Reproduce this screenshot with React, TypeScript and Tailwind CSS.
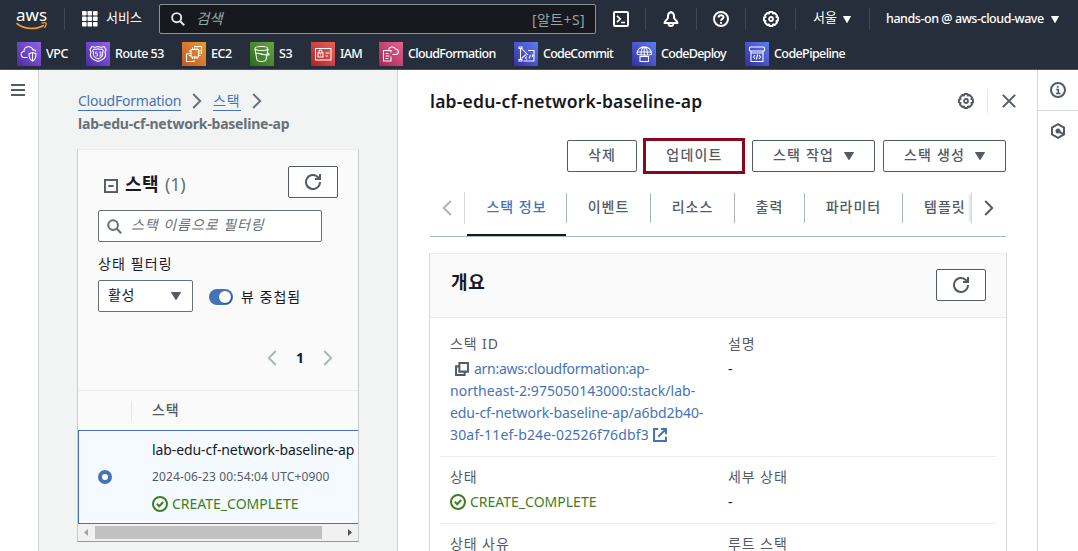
import React from "react";

type IconProps = { className?: string };

const Svg = ({ children, className = "" }: { children: React.ReactNode; className?: string }) => (
  <svg viewBox="0 0 16 16" fill="none" stroke="currentColor" strokeWidth="2" className={`shrink-0 ${className}`}>
    {children}
  </svg>
);

const Gear = ({ className = "size-4" }: IconProps) => (
  <Svg className={className}>
    <path
      strokeWidth="1.9"
      strokeLinejoin="round"
      d="M6.5 1h3l.5 1.600L11.600 2 14 4.400 13.400 6 15 6.500v3l-1.600.5.6 1.600-2.400 2.400-1.600-.6-.5 1.600h-3L6 13.400l-1.600.6L2 11.600l.6-1.600L1 9.500v-3L2.600 6 2 4.400 4.400 2 6 2.600z"
    />
    <circle cx="8" cy="8" r="2" strokeWidth="1.8" />
  </Svg>
);
const Search = ({ className = "size-4" }: IconProps) => (
  <Svg className={className}>
    <circle cx="6.500" cy="6.500" r="5.200" strokeWidth="2.200" />
    <path d="M10.200 10.200l4.900 4.900" strokeWidth="2.300" />
  </Svg>
);
const Refresh = () => (
  <Svg className="size-4 text-[#545b64]">
    <path d="M15 8a7 7 0 1 1-2.200-5.100L14.500 5" />
    <path d="M15 0v5h-5" />
  </Svg>
);
const Chevron = ({ className = "", left = false }: IconProps & { left?: boolean }) => (
  <svg viewBox="0 0 10 16" fill="none" stroke="currentColor" strokeWidth="2" className={`h-4 w-[10px] shrink-0 ${className}`}>
    <path d={left ? "M8.800 1L1.800 8l7 7" : "M1.200 1l7 7-7 7"} />
  </svg>
);
const Caret = ({ className = "" }: IconProps) => (
  <svg viewBox="0 0 10 8" fill="currentColor" preserveAspectRatio="none" className={`shrink-0 ${className}`}>
    <path d="M.5 0h9a.4.4 0 0 1 .3.700L5.500 7.700a.6.6 0 0 1-1 0L.2.700A.4.4 0 0 1 .5 0z" />
  </svg>
);
const Check = () => (
  <Svg className="size-4">
    <circle cx="8" cy="8" r="7" />
    <path d="M4.800 7.800l2.400 2.400 4-4.200" />
  </Svg>
);

const GLYPHS: Record<string, React.ReactNode> = {
  VPC: (
    <>
      <path d="M10.500 15.500H7.500a3 3 0 0 1-.5-6 4.600 4.600 0 0 1 9-1.500 2.500 2.500 0 0 1 3 1.500" />
      <path d="M15.500 10.500l3.500 1.200c0 3.500-.5 6-3.500 7.300-3-1.300-3.500-3.800-3.500-7.300zM15.500 10.500v8.500" />
    </>
  ),
  "Route 53": (
    <>
      <path d="M6 4.500c2 1 4 1 6 0 2 1 4 1 6 0l2 3-1 2.500c2 5-1 7.500-7 9.500-6-2-9-4.500-7-9.500L4 7.500z" />
      <path d="M8 7c1.500.5 2.500.5 4-.3 1.500.8 2.500.8 4 .3l1.300 1.500-.7 2c1.200 3.500-.8 5-4.600 6.500-3.800-1.500-5.800-3-4.600-6.500l-.7-2z" />
      <path d="M11.500 10H9.500v1.700h2V14h-2M13 10h2v4h-2M13.500 12H15" strokeWidth=".8" />
    </>
  ),
  EC2: (
    <>
      <rect x="9" y="7.500" width="7.500" height="7.500" rx=".5" />
      <path d="M10.500 7.500V5.500M12.700 7.500V5.500M15 7.500V5.500M10.500 17v-2M12.700 17v-2M15 17v-2M9 9H7M9 11.200H7M9 13.500H7M18.500 9h-2M18.500 11.200h-2M18.500 13.500h-2M12 4.500h7.500V12M7 12H4.500v7.500H12V18" />
    </>
  ),
  S3: (
    <>
      <ellipse cx="11.500" cy="6.500" rx="6.500" ry="2" />
      <path d="M5 7l2 11c1.200 2 7.800 2 9 0l2-11M6 11c4 .2 8 2.700 13 2 .8-.8-1-1.800-2-2.200" />
      <circle cx="11.500" cy="12" r=".8" fill="white" stroke="none" />
    </>
  ),
  IAM: (
    <>
      <rect x="4.500" y="6.500" width="15.500" height="11.500" />
      <rect x="7" y="11" width="5" height="4" />
      <path d="M8 11V9.500a1.500 1.500 0 0 1 3 0V11M9.500 12.500v1M14.500 11h4M14.500 14h2.500" />
    </>
  ),
  CloudFormation: (
    <>
      <path d="M12 10.500V8.500H4.500v10.500H12V14.500M6.500 11.500h3M6.500 14h4M6.500 16.500h3" />
      <path d="M9.500 7.500A3.800 3.800 0 0 1 16.500 7c3.500.2 4 4.800.5 5.500H13.500" />
    </>
  ),
  CodeCommit: (
    <>
      <path d="M6.500 6.500v11M7.500 6.500l6.500 6.500M7.500 16.500l4.500-4M14 8.500h6v10.500H9.500M5 19h3v-1.500H5zM5 5h3v1.500H5zM13 14.500l-1.500 1.500 1.500 1.500M16.500 13l-1.500 3.500M18 12.500l1 1.200-1 1.300" />
    </>
  ),
  CodeDeploy: (
    <>
      <path d="M5 12c0-9.500 14.500-9.500 14.500 0 0 1.500-14.500 1.500-14.500 0zM9 12.500c0-5 1.200-7 3.200-7.500 2 .5 3.300 2.500 3.300 7.500M12.200 5v8M5.500 10h13.500M8 14.500h8.500v5H8z" />
    </>
  ),
  CodePipeline: (
    <>
      <rect x="4.500" y="5" width="15" height="4" rx="1" />
      <path d="M6 9v10.500h12V9M6 11h12M10 13l-1.500 2 1.500 2M14 13l1.500 2-1.500 2M12.700 12.500l-1.400 5" />
    </>
  ),
};

const SERVICES: { name: string; cell: string; tile: string; text: string }[] = [
  { name: "VPC", cell: "w-[69px]", tile: "from-[#4d2ba3] to-[#9362ec]", text: "tracking-[-0.4px]" },
  { name: "Route 53", cell: "w-[96px]", tile: "from-[#4d2ba3] to-[#9362ec]", text: "tracking-[-0.5px]" },
  { name: "EC2", cell: "w-[68px]", tile: "from-[#c25a28] to-[#e99a35]", text: "tracking-[-0.5px]" },
  { name: "S3", cell: "w-[61px]", tile: "from-[#2c6b22] to-[#69a343]", text: "tracking-[-0.5px]" },
  { name: "IAM", cell: "w-[68px]", tile: "from-[#b11f26] to-[#e9605b]", text: "tracking-[-0.7px]" },
  { name: "CloudFormation", cell: "w-[135px]", tile: "from-[#a52456] to-[#e56290]", text: "tracking-[-0.65px]" },
  { name: "CodeCommit", cell: "w-[118px]", tile: "from-[#352da4] to-[#5f7cf0]", text: "tracking-[-0.8px]" },
  { name: "CodeDeploy", cell: "w-[113px]", tile: "from-[#352da4] to-[#5f7cf0]", text: "tracking-[-0.7px]" },
  { name: "CodePipeline", cell: "w-[110px]", tile: "from-[#352da4] to-[#5f7cf0]", text: "tracking-[-0.6px]" },
];

const Divider = () => <span className="h-[22px] w-px shrink-0 bg-[#414750]" />;

function Header() {
  return (
    <header className="flex h-[70px] shrink-0 flex-col border-b border-[#4b525d] bg-[#272e3b] text-white">
      <div className="flex h-[38px] items-center">
        <div className="ml-4 flex w-[31px] shrink-0 flex-col items-center pt-px">
          <span className="h-[14px] text-[17px] leading-[11px] tracking-[0px]">aws</span>
          <svg viewBox="0 0 31 8" className="-mt-px h-2 w-[31px]" fill="none" stroke="#f29a2e" strokeWidth="1.7">
            <path d="M.5 1.200C8 7.600 20 8 28 3.200" />
            <path d="M25.500 1.200c2-.6 4-.6 4.500-.2.400.8-.3 3.200-1.600 4.800" strokeWidth="1.3" />
          </svg>
        </div>
        <div className="ml-[17px] flex"><Divider /></div>
        <svg viewBox="0 0 16 16" fill="white" className="ml-[17px] size-4 shrink-0">
          {[0, 5.5, 11].map((y) => [0, 5.5, 11].map((x) => <rect key={`${x}-${y}`} x={x} y={y} width="4.6" height="4.6" rx=".8" />))}
        </svg>
        <span className="ml-2 w-[53px] shrink-0 pb-[2px] text-[13px] tracking-[0.1px] whitespace-nowrap">서비스</span>
        <div className="flex h-[30px] w-[437px] shrink-0 items-center rounded-[2px] border border-[#8a9496] bg-[#17191f] pr-[10px] pl-[11px]">
          <Search className="size-[14px] text-[#e4e7e8]" />
          <span className="ml-[11px] flex-1 text-[14.5px] text-[#95a5a6] italic">검색</span>
          <span className="text-[14px] tracking-[0.4px] text-[#95a5a6]">[알트+S]</span>
        </div>
        <Svg className="ml-[17px] size-4">
          <rect x="1" y="1" width="14" height="14" rx="1" />
          <path d="M4 4.800L7.200 8 4 11.200M8 11.500h4" strokeWidth="1.7" />
        </Svg>
        <div className="ml-4 flex"><Divider /></div>
        <Svg className="ml-[17px] size-4">
          <path d="M8 1.200C6 1.500 5 3 5 5v1.500C5 8.500 1.500 9.500 1.500 12h13c0-2.500-3.500-3.500-3.500-5.500V5c0-2-1-3.500-3-3.800z" strokeLinejoin="round" />
          <path d="M8 0v2M5.500 12.500a2.500 2.500 0 0 0 5 0" />
        </Svg>
        <div className="ml-[17px] flex"><Divider /></div>
        <Svg className="ml-4 size-4">
          <circle cx="8" cy="8" r="7" />
          <path d="M5.500 6.600c0-3.200 5-3.200 5-.3C10.500 7.900 8 7.900 8 9.800M8 10.900v1.900" />
        </Svg>
        <div className="ml-4 flex"><Divider /></div>
        <Gear className="ml-[17px] size-4" />
        <div className="ml-4 flex"><Divider /></div>
        <span className="ml-[17px] w-[30px] shrink-0 pb-[2px] text-[13px] whitespace-nowrap">서울</span>
        <Caret className="h-[7px] w-2" />
        <div className="ml-[18px] flex"><Divider /></div>
        <span className="ml-4 w-[165px] shrink-0 text-[12.5px] font-medium tracking-[-0.45px] whitespace-nowrap">hands-on @ aws-cloud-wave</span>
        <Caret className="h-[7px] w-2" />
      </div>
      <nav className="flex h-[31px] items-center pl-[17px]">
        {SERVICES.map((s) => (
          <a key={s.name} className={`flex shrink-0 items-center gap-[5px] ${s.cell}`}>
            <span className={`size-6 shrink-0 bg-linear-to-tr ${s.tile}`}>
              <svg viewBox="0 0 24 24" className="size-6" fill="none" stroke="white" strokeWidth="1.05">{GLYPHS[s.name]}</svg>
            </span>
            <span className={`pt-[2px] text-[12.5px] font-medium whitespace-nowrap ${s.text}`}>{s.name}</span>
          </a>
        ))}
      </nav>
    </header>
  );
}

const RefreshButton = () => (
  <button className="flex h-8 w-[50px] shrink-0 items-center justify-center rounded-[2px] border border-[#545b64] bg-white">
    <Refresh />
  </button>
);

function StackList() {
  return (
    <aside className="flex w-[359px] shrink-0 flex-col border-r border-[#cfd2d2] bg-[#f2f3f3] pt-5 pl-[38px]">
      <div className="ml-px flex h-[22px] items-center text-[14px] text-[#4573b8]">
        <a className="h-[20px] w-[103px] border-b border-[#4573b8] leading-[20px] tracking-[-0.24px] whitespace-nowrap">CloudFormation</a>
        <Chevron className="ml-[11px] text-[#687078]" />
        <a className="ml-[11px] h-[20px] w-7 border-b border-[#4573b8] leading-[20px] tracking-[0.8px]">스택</a>
        <Chevron className="ml-[11px] text-[#687078]" />
      </div>
      <div className="ml-px h-[22px] text-[14px] leading-[23px] font-bold tracking-[-0.21px] whitespace-nowrap text-[#687078]">lab-edu-cf-network-baseline-ap</div>
      <div className="mt-[15px] flex h-[393px] w-[282px] flex-col overflow-hidden border border-t-[#eaeded] border-r-[#c9cccc] border-b-[#959a9b] border-l-[#c9cccc] bg-[#fafafa]">
        <div className="flex h-[60px] items-center pr-5 pl-[26px]">
          <Svg className="mt-[11px] size-[14px] text-[#545b64]">
            <rect x="1.100" y="1.100" width="13.800" height="13.800" strokeWidth="2.200" />
            <path d="M5 8h6" strokeWidth="2.200" />
          </Svg>
          <span className="ml-[7px] w-10 pt-[8px] text-[18px] font-bold tracking-[0.5px] text-[#16191f]">스택</span>
          <span className="flex-1 pt-[9px] text-[18px] tracking-[-0.2px] text-[#687078]">(1)</span>
          <span className="mt-1 flex"><RefreshButton /></span>
        </div>
        <div className="ml-[20px] flex h-8 w-[224px] shrink-0 items-center rounded-[2px] border border-[#687078] bg-white pl-2">
          <Search className="size-[15px] text-[#687078]" />
          <span className="ml-[9px] pb-[3px] text-[14px] tracking-[0.95px] whitespace-nowrap text-[#687078] italic">스택 이름으로 필터링</span>
        </div>
        <div className="mt-[11px] ml-[20px] h-[22px] text-[14px] leading-[22px] tracking-[1.1px] text-[#16191f]">상태 필터링</div>
        <div className="mt-[5px] ml-[20px] flex h-8 items-center text-[14px] text-[#16191f]">
          <div className="flex h-8 w-[95px] items-center justify-between rounded-[2px] border border-[#687078] bg-white pr-[11px] pl-[9px]">
            <span className="pb-[3px] tracking-[0.5px]">활성</span>
            <Caret className="h-[8px] w-[10px] text-[#545b64]" />
          </div>
          <span className="mt-[2px] ml-4 flex h-4 w-6 items-center justify-end rounded-full bg-[#4573b8] pr-[2px]">
            <span className="size-3 rounded-full bg-white shadow-[1px_1px_1px_#2d4f84]" />
          </span>
          <span className="ml-2 tracking-[1px]">뷰 중첩됨</span>
        </div>
        <div className="mt-[35px] flex h-[22px] items-center justify-end pr-[25px] text-[#aab7b8]">
          <Chevron left />
          <span className="w-[46px] pb-[2px] text-center text-[14px] font-bold text-[#16191f]">1</span>
          <Chevron />
        </div>
        <div className="mt-[21px] flex h-[40px] shrink-0 items-center border-t border-[#eaeded]">
          <span className="ml-[53px] h-5 w-px bg-[#e3e6e6]" />
          <span className="ml-5 pb-[3px] text-[14px] font-medium tracking-[0.9px] text-[#545b64]">스택</span>
        </div>
        <div className="flex h-[94px] shrink-0 items-center border-y border-l border-[#4573b8] bg-[#f4faff]">
          <span className="ml-[19px] flex size-[14px] shrink-0 items-center justify-center rounded-full bg-[#4573b8]">
            <span className="size-[6px] rounded-full bg-white" />
          </span>
          <div className="ml-10 text-[14px] whitespace-nowrap">
            <div className="h-[27px] leading-[26px] tracking-[-0.09px] text-[#16191f]">lab-edu-cf-network-baseline-ap</div>
            <div className="h-[27px] text-[12px] leading-[26px] tracking-[0.14px] text-[#545b64]">2024-06-23 00:54:04 UTC+0900</div>
            <div className="flex h-[27px] items-center gap-1 tracking-[0px] text-[#3f7e23]">
              <Check />
              <span className="pb-px">CREATE_COMPLETE</span>
            </div>
          </div>
        </div>
        <div className="flex h-[17px] shrink-0 items-center justify-between bg-[#f1f1f1] pr-[6px] pl-[6px]">
          <svg viewBox="0 0 4 7" className="h-[7px] w-1" fill="#a3a3a3"><path d="M4 0v7L0 3.500z" /></svg>
          <span className="mr-auto ml-[7px] h-[13px] w-[227px] bg-[#c1c1c1]" />
          <svg viewBox="0 0 4 7" className="h-[7px] w-1" fill="#505050"><path d="M0 0v7l4-3.500z" /></svg>
        </div>
      </div>
    </aside>
  );
}

const BTN = "flex h-8 shrink-0 items-center justify-center rounded-[2px] border border-[#545b64] bg-white";
const TABS = [
  ["이벤트", "w-[84px]"],
  ["리소스", "w-[84px]"],
  ["출력", "w-[70px]"],
  ["파라미터", "w-[98px]"],
];

function Field({ label, children, className = "" }: { label: string; children?: React.ReactNode; className?: string }) {
  return (
    <div className={className}>
      <div className="h-[22px] leading-[20px] tracking-[0.9px] whitespace-nowrap text-[#545b64]">{label}</div>
      {children && <div className="mt-[2px] leading-[22px]">{children}</div>}
    </div>
  );
}

function Details() {
  return (
    <main className="flex w-[639px] shrink-0 flex-col overflow-hidden bg-white pr-[30px] pl-[31px] text-[14px] text-[#16191f]">
      <div className="mt-[19px] flex h-6 items-center pl-px">
        <h1 className="flex-1 text-[17.5px] font-semibold tracking-[0.21px] whitespace-nowrap">lab-edu-cf-network-baseline-ap</h1>
        <Gear className="size-4 text-[#545b64]" />
        <span className="ml-[13px] h-6 w-px bg-[#e3e6e6]" />
        <Svg className="mr-[-9px] ml-[14px] size-[14px] text-[#545b64]"><path d="M1 1l14 14M15 1L1 15" strokeWidth="2.300" /></Svg>
      </div>
      <div className="mt-[25px] flex h-[36px] items-center justify-end pr-px font-medium tracking-[1px] text-[#545b64]">
        <button className={`${BTN} w-[70px] pb-[3px]`}>삭제</button>
        <button className="ml-[6px] flex h-[36px] w-[102px] shrink-0 items-center justify-center border-[3px] border-[#8b0720] bg-white pb-[3px] pl-px tracking-[1.2px]">업데이트</button>
        <button className={`${BTN} ml-[7px] w-[123px] gap-[10px]`}><span className="pb-[3px] tracking-[1.2px]">스택 작업</span><Caret className="h-[8px] w-[10px]" /></button>
        <button className={`${BTN} ml-2 w-[123px] gap-[10px]`}><span className="pb-[3px] tracking-[1.2px]">스택 생성</span><Caret className="h-[8px] w-[10px]" /></button>
      </div>
      <div className="mt-[10px] mr-px ml-px flex h-[53px] shrink-0 border-b border-[#aab7b8] font-medium tracking-[1px] text-[#545b64]">
        <div className="mt-2 flex h-8 w-[35px] shrink-0 items-center border-r border-[#d5dbdb] pl-3 text-[#aab7b8]"><Chevron left /></div>
        <div className="ml-[2px] flex w-[99px] shrink-0 border-b-2 border-[#16191f]">
          <span className="mt-[9px] flex h-[30px] w-full items-center justify-center pb-[3px] text-[#4573b8]">스택 정보</span>
        </div>
        {TABS.map(([t, w]) => (
          <span key={t} className={`mt-[9px] flex h-[30px] shrink-0 items-center justify-center border-l border-[#aab7b8] pb-[3px] ${w}`}>{t}</span>
        ))}
        <span className="mt-[9px] flex h-[30px] w-[69px] shrink-0 items-center border-l border-[#aab7b8] pb-[3px] pl-[21px] whitespace-nowrap">템플릿</span>
        <div className="mt-2 flex h-8 w-[35px] shrink-0 items-center border-l border-[#d5dbdb] pl-3 shadow-[-3px_0_3px_-2px_#cfd3d3]"><Chevron /></div>
      </div>
      <section className="mt-4 flex h-[420px] w-[578px] shrink-0 flex-col border border-t-[#eaeded] border-r-[#d5dbdb] border-l-[#d5dbdb]">
        <div className="flex h-[64px] shrink-0 items-center border-b border-[#eaeded] bg-[#fafafa] pr-5 pb-px pl-[21px]">
          <h2 className="flex-1 pb-[5px] text-[18px] font-bold tracking-[0.8px]">개요</h2>
          <RefreshButton />
        </div>
        <div className="mx-[10px] flex h-[139px] shrink-0 border-b border-[#eaeded] px-[10px] pt-4">
          <Field label="스택 ID" className="w-[278px]">
            <div className="whitespace-nowrap text-[#4573b8]">
              <div className="flex h-[22px] items-center">
                <Svg className="mr-[5px] ml-[5px] size-[14px] text-[#545b64]">
                  <path d="M5 1.200h9.800v9.800H5z" strokeWidth="2.300" />
                  <path d="M5 5H1.200v9.800H11v-4" strokeWidth="2.300" />
                </Svg>
                <span className="tracking-[-0.27px]">arn:aws:cloudformation:ap-</span>
              </div>
              <div className="tracking-[0.04px]">northeast-2:975050143000:stack/lab-</div>
              <div className="tracking-[-0.07px]">edu-cf-network-baseline-ap/a6bd2b40-</div>
              <div className="flex h-[22px] items-center">
                <span className="tracking-[0.17px]">30af-11ef-b24e-02526f76dbf3</span>
                <Svg className="ml-[4px] size-[14px]">
                  <path d="M6 1.200H1.200v13.600h13.600V10M9 1.200h5.800V7M14.800 1.200L6 10" strokeWidth="2.300" />
                </Svg>
              </div>
            </div>
          </Field>
          <Field label="설명">-</Field>
        </div>
        <div className="mx-[10px] flex h-[67px] shrink-0 border-b border-[#eaeded] px-[10px] pt-[10px]">
          <Field label="상태" className="w-[278px]">
            <div className="flex h-[22px] items-center gap-1 tracking-[0px] text-[#3f7e23]"><Check /><span>CREATE_COMPLETE</span></div>
          </Field>
          <Field label="세부 상태">-</Field>
        </div>
        <div className="mx-[10px] flex px-[10px] pt-[10px]">
          <Field label="상태 사유" className="w-[278px]" />
          <Field label="루트 스택" />
        </div>
      </section>
    </main>
  );
}

export default function App() {
  return (
    <div className="flex h-[551px] w-[1078px] flex-col overflow-hidden bg-white font-['Noto_Sans','Noto_Sans_CJK_KR',sans-serif]">
      <Header />
      <div className="flex h-[481px]">
        <div className="w-[39px] shrink-0 border-r border-[#cfd2d2] bg-white pt-[14px] pl-[11px]">
          <div className="flex w-[14px] flex-col gap-[3px]">
            <span className="h-[2px] bg-[#545b64]" />
            <span className="h-[2px] bg-[#545b64]" />
            <span className="h-[2px] bg-[#545b64]" />
          </div>
        </div>
        <StackList />
        <Details />
        <div className="flex flex-1 flex-col border-l border-[#d5dbdb] bg-white text-[#545b64]">
          <div className="flex h-[41px] items-center border-b border-[#d5dbdb] pl-3">
            <Svg className="size-4">
              <circle cx="8" cy="8" r="7" />
              <path d="M7.700 3.800v1.900M6.200 7.500H8.300V11M6 11.500h4.500" strokeWidth="1.7" />
            </Svg>
          </div>
          <div className="flex h-[39px] items-center pl-3">
            <Svg className="size-4">
              <path d="M8 1.200l6 3.400v6.800l-6 3.400-6-3.400V4.600z" />
              <circle cx="8" cy="8" r="1.500" fill="currentColor" />
              <path d="M8 8l5 2.800" />
            </Svg>
          </div>
        </div>
      </div>
    </div>
  );
}
